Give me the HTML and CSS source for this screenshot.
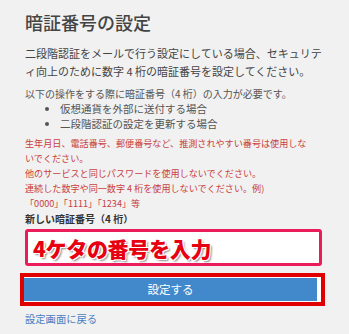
FILE: index.html
```html
<!DOCTYPE html>
<html lang="ja">
<head>
<meta charset="utf-8">
<title>暗証番号の設定</title>
<link rel="stylesheet" href="styles.css">
</head>
<body>
<main class="page">
  <h1 class="title">暗証番号の設定</h1>
  <p class="lead">二段階認証をメールで行う設定にしている場合、セキュリテ<br>ィ向上のために数字 4 桁の暗証番号を設定してください。</p>
  <p class="note">以下の操作をする際に暗証番号（4 桁）の入力が必要です。</p>
  <ul class="cases">
    <li>仮想通貨を外部に送付する場合</li>
    <li>二段階認証の設定を更新する場合</li>
  </ul>
  <p class="warn">生年月日、電話番号、郵便番号など、推測されやすい番号は使用しな<br>いでください。</p>
  <p class="warn">他のサービスと同じパスワードを使用しないでください。</p>
  <p class="warn">連続した数字や同一数字 4 桁を使用しないでください。例)<br>「0000」「1111」「1234」等</p>
  <label class="label" for="pin">新しい暗証番号（4 桁）</label>
  <div class="input-box" id="pin">
    <span class="callout">4ケタの番号を入力</span>
  </div>
  <div class="btn-frame">
    <button class="btn" type="button">設定する</button>
  </div>
  <a class="back" href="#">設定画面に戻る</a>
</main>
</body>
</html>
```

FILE: styles.css
```css
html, body {
  margin: 0;
  padding: 0;
}
body {
  background: #f1f1f1;
  font-family: "Noto Sans CJK JP", "Noto Sans", sans-serif;
  color: #4a4a4a;
}
.page {
  width: 300px;
  padding: 10px 0 0 25px;
  display: flex;
  flex-direction: column;
  align-items: flex-start;
}
.title {
  margin: 0;
  font-size: 18px;
  line-height: 24px;
  font-weight: 500;
  color: #444;
}
.lead {
  margin: 10px 0 0;
  font-size: 11px;
  line-height: 18px;
  color: #444;
  white-space: nowrap;
}
.note {
  margin: 5.5px 0 0;
  font-size: 10px;
  line-height: 15px;
  color: #555;
}
.cases {
  margin: 0;
  padding-left: 35px;
  font-size: 10.5px;
  line-height: 15px;
  color: #555;
}
.warn {
  margin: 0;
  font-size: 9.1px;
  line-height: 15px;
  color: #c84040;
  white-space: nowrap;
}
.cases + .warn {
  margin-top: 5px;
}
.label {
  margin-top: 0;
  font-size: 10px;
  line-height: 15px;
  font-weight: bold;
  color: #333;
}
.input-box {
  box-sizing: border-box;
  margin-top: 3.5px;
  width: 297px;
  height: 37px;
  border: 3px solid #ea1d5a;
  border-radius: 3px;
  background: #fff;
  display: flex;
  align-items: center;
  padding-left: 5px;
}
.callout {
  font-size: 21px;
  font-weight: 900;
  color: #e60012;
  letter-spacing: -0.3px;
  text-shadow:
    -1px -1px 0 #fff, 1px -1px 0 #fff, -1px 1px 0 #fff, 1px 1px 0 #fff,
    2px 2px 2px rgba(0, 0, 0, 0.45);
}
.btn-frame {
  box-sizing: border-box;
  margin: 7px 0 0 -5px;
  width: 305px;
  height: 33px;
  border: 4px solid #e00000;
  background: #fff;
  padding: 1px 4px 1px 0;
  display: flex;
}
.btn {
  flex: 1;
  border: none;
  margin: 0;
  padding: 0;
  background: #4289cc;
  color: #fff;
  font-family: inherit;
  font-size: 11.5px;
  line-height: 23px;
  height: 23px;
}
.back {
  margin-top: 4.5px;
  font-size: 10.3px;
  line-height: 15px;
  color: #4a7fc1;
  text-decoration: none;
}
```
